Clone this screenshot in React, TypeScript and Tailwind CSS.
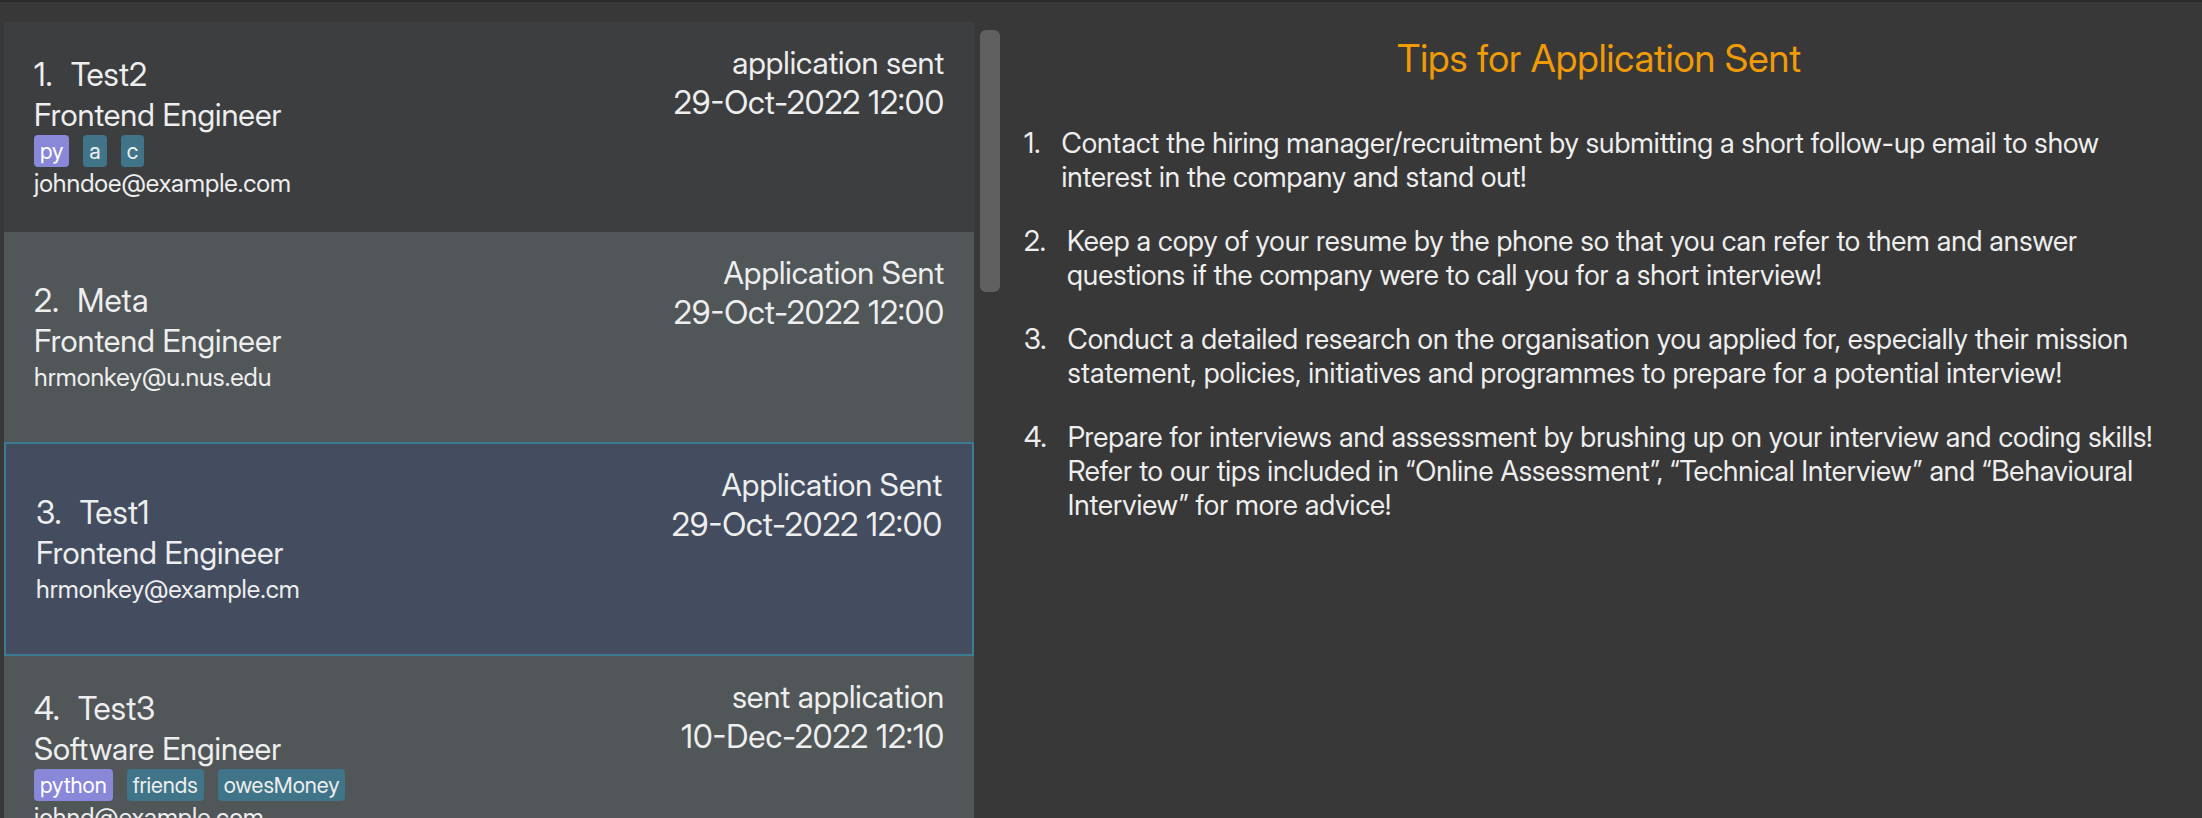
import React from "react";
import clsx from "clsx";

type Tag = { label: string; language?: boolean };

type Application = {
  company: string;
  position: string;
  email: string;
  status: string;
  date: string;
  tags: Tag[];
};

const applications: Application[] = [
  {
    company: "Test2",
    position: "Frontend Engineer",
    email: "johndoe@example.com",
    status: "application sent",
    date: "29-Oct-2022 12:00",
    tags: [{ label: "py", language: true }, { label: "a" }, { label: "c" }],
  },
  {
    company: "Meta",
    position: "Frontend Engineer",
    email: "hrmonkey@u.nus.edu",
    status: "Application Sent",
    date: "29-Oct-2022 12:00",
    tags: [],
  },
  {
    company: "Test1",
    position: "Frontend Engineer",
    email: "hrmonkey@example.cm",
    status: "Application Sent",
    date: "29-Oct-2022 12:00",
    tags: [],
  },
  {
    company: "Test3",
    position: "Software Engineer",
    email: "johnd@example.com",
    status: "sent application",
    date: "10-Dec-2022 12:10",
    tags: [{ label: "python", language: true }, { label: "friends" }, { label: "owesMoney" }],
  },
];

const selectedIndex = 2;

const tips = [
  "Contact the hiring manager/recruitment by submitting a short follow-up email to show interest in the company and stand out!",
  "Keep a copy of your resume by the phone so that you can refer to them and answer questions if the company were to call you for a short interview!",
  "Conduct a detailed research on the organisation you applied for, especially their mission statement, policies, initiatives and programmes to prepare for a potential interview!",
  "Prepare for interviews and assessment by brushing up on your interview and coding skills! Refer to our tips included in “Online Assessment”, “Technical Interview” and “Behavioural Interview” for more advice!",
];

function ApplicationCard({ application, index }: { application: Application; index: number }) {
  const selected = index === selectedIndex;
  return (
    <li
      aria-current={selected}
      className={clsx(
        "box-content flex h-[210px] shrink-0 items-center justify-between pr-[30px] pl-[30px]",
        selected
          ? "border-2 border-[#3c7b91] bg-[#434d5f]"
          : index % 2 === 0
            ? "bg-[#3d3e40]"
            : "bg-[#515658]",
      )}
    >
      <div>
        <h2 className="flex gap-[18px] text-[32px] leading-10">
          <span>{index + 1}.</span>
          <span>{application.company}</span>
        </h2>
        <p className="text-[31px] leading-10">{application.position}</p>
        {application.tags.length > 0 && (
          <ul className="flex gap-3.5">
            {application.tags.map((tag) => (
              <li
                key={tag.label}
                className={clsx(
                  "rounded px-1.5 text-[22px] leading-8",
                  tag.language ? "bg-[#8887d8] text-white" : "bg-[#407488]",
                )}
              >
                {tag.label}
              </li>
            ))}
          </ul>
        )}
        <p className="text-[25px] leading-8">{application.email}</p>
      </div>
      <div className="self-start pt-[21px] text-right leading-10">
        <p className="text-[31px] leading-10">{application.status}</p>
        <p className="text-[32px] leading-10">{application.date}</p>
      </div>
    </li>
  );
}

export default function App() {
  return (
    <main className="flex h-screen overflow-hidden border-t-2 border-[#2b2b2b] bg-[#383838] font-['Inter_Display','Inter','Liberation_Sans',sans-serif] text-[#eeeeee]">
      <section aria-label="Applications" className="flex w-[45.6%] gap-1.5 pt-5 pr-1 pl-1">
        <ul className="flex min-w-0 flex-1 flex-col">
          {applications.map((application, index) => (
            <ApplicationCard key={application.company} application={application} index={index} />
          ))}
        </ul>
        <div className="w-5 pt-2">
          <div className="h-[262px] rounded-md bg-[#606060]" />
        </div>
      </section>
      <section aria-label="Tips" className="flex-1 pt-8 pr-7 pl-5">
        <h1 className="text-center text-[38px] leading-[48px] text-[#f09b06]">
          Tips for Application Sent
        </h1>
        <ol className="mt-11 flex flex-col gap-[30px] text-[28px] leading-[34px]">
          {tips.map((tip, index) => (
            <li key={tip} className="flex gap-[21px]">
              <span>{index + 1}.</span>
              <p>{tip}</p>
            </li>
          ))}
        </ol>
      </section>
    </main>
  );
}
